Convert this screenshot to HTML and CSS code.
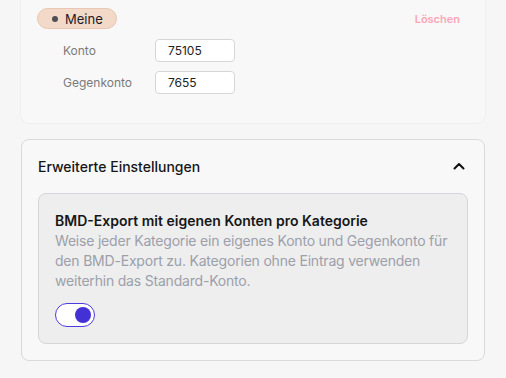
FILE: index.html
```html
<!DOCTYPE html>
<html lang="de">
<head>
<meta charset="utf-8">
<link rel="stylesheet" href="styles.css">
</head>
<body>
<div class="page">
  <section class="card cat-card">
    <div class="cat-head">
      <span class="pill"><span class="dot"></span>Meine</span>
      <button class="delete">Löschen</button>
    </div>
    <div class="field">
      <label class="field-label">Konto</label>
      <input class="field-input" type="text" value="75105">
    </div>
    <div class="field">
      <label class="field-label">Gegenkonto</label>
      <input class="field-input" type="text" value="7655">
    </div>
  </section>

  <section class="card adv-card">
    <div class="adv-head">
      <h2 class="adv-title">Erweiterte Einstellungen</h2>
      <svg class="chevron" width="12" height="8" viewBox="0 0 12 8"><polyline points="1.5,6.5 6,2 10.5,6.5" fill="none" stroke="#111" stroke-width="2" stroke-linecap="round" stroke-linejoin="round"/></svg>
    </div>
    <div class="option">
      <div class="option-title">BMD-Export mit eigenen Konten pro Kategorie</div>
      <p class="option-desc">Weise jeder Kategorie ein eigenes Konto und Gegenkonto für den BMD-Export zu. Kategorien ohne Eintrag verwenden weiterhin das Standard-Konto.</p>
      <span class="toggle"><span class="knob"></span></span>
    </div>
  </section>
</div>
</body>
</html>
```

FILE: styles.css
```css
* { box-sizing: border-box; }
html, body {
  margin: 0;
  background: #f6f6f6;
  font-family: "Inter", "Liberation Sans", sans-serif;
  color: #1a1a1a;
}
.page {
  padding: 0 21px;
  display: flex;
  flex-direction: column;
  gap: 16px;
}
.card {
  background: #f8f8f8;
  border-radius: 8px;
}
.cat-card {
  border-radius: 0 0 8px 8px;
  box-shadow: 0 0 0 1px #efefef;
  padding: 8px 25px 29px 16px;
  display: flex;
  flex-direction: column;
  gap: 9px;
}
.cat-head {
  display: flex;
  align-items: center;
  justify-content: space-between;
  margin-bottom: 1px;
}
.pill {
  display: inline-flex;
  align-items: center;
  gap: 7px;
  height: 21px;
  padding: 0 13px 0 14px;
  background: #f3d9c8;
  border: 1px solid #e8c6b1;
  border-radius: 11px;
  font-size: 13px;
  font-weight: 400;
  color: #1c1c2a;
}
.dot {
  width: 6px;
  height: 6px;
  border-radius: 50%;
  background: #4f4f55;
}
.delete {
  border: 0;
  background: none;
  padding: 0;
  font-family: inherit;
  font-size: 11px;
  font-weight: 600;
  color: #fba7b6;
}
.field {
  display: flex;
  align-items: center;
  padding-left: 26px;
}
.field-label {
  width: 92px;
  font-size: 12px;
  color: #7a7a7a;
}
.field-input {
  width: 80px;
  height: 23px;
  border: 1px solid #d6d6d6;
  border-radius: 4px;
  background: #fff;
  padding: 0 12px;
  font-family: inherit;
  font-size: 12px;
  color: #222;
}
.adv-card {
  border: 1px solid #d9d9de;
  padding: 17px 16px 16px 16px;
}
.adv-head {
  display: flex;
  align-items: center;
  justify-content: space-between;
  height: 20px;
  margin-bottom: 16px;
  padding-right: 3px;
}
.adv-title {
  margin: 0;
  font-size: 14px;
  font-weight: 500;
  line-height: 20px;
  color: #161616;
}
.chevron { margin-top: -3px; }
.option {
  background: #eeeeee;
  border: 1px solid #d5d5da;
  border-radius: 8px;
  padding: 17px 16px 16px 16px;
}
.option-title {
  font-size: 14px;
  font-weight: 600;
  line-height: 20px;
  color: #171717;
}
.option-desc {
  margin: 0 0 12px;
  font-size: 14px;
  line-height: 20px;
  letter-spacing: -0.2px;
  color: #9ca0aa;
}
.toggle {
  display: flex;
  align-items: center;
  justify-content: flex-end;
  width: 40px;
  height: 24px;
  padding-right: 3px;
  border: 1.5px solid #4d3ae0;
  border-radius: 12px;
  background: #fff;
}
.knob {
  width: 16px;
  height: 16px;
  border-radius: 50%;
  background: #4431d6;
}
```
